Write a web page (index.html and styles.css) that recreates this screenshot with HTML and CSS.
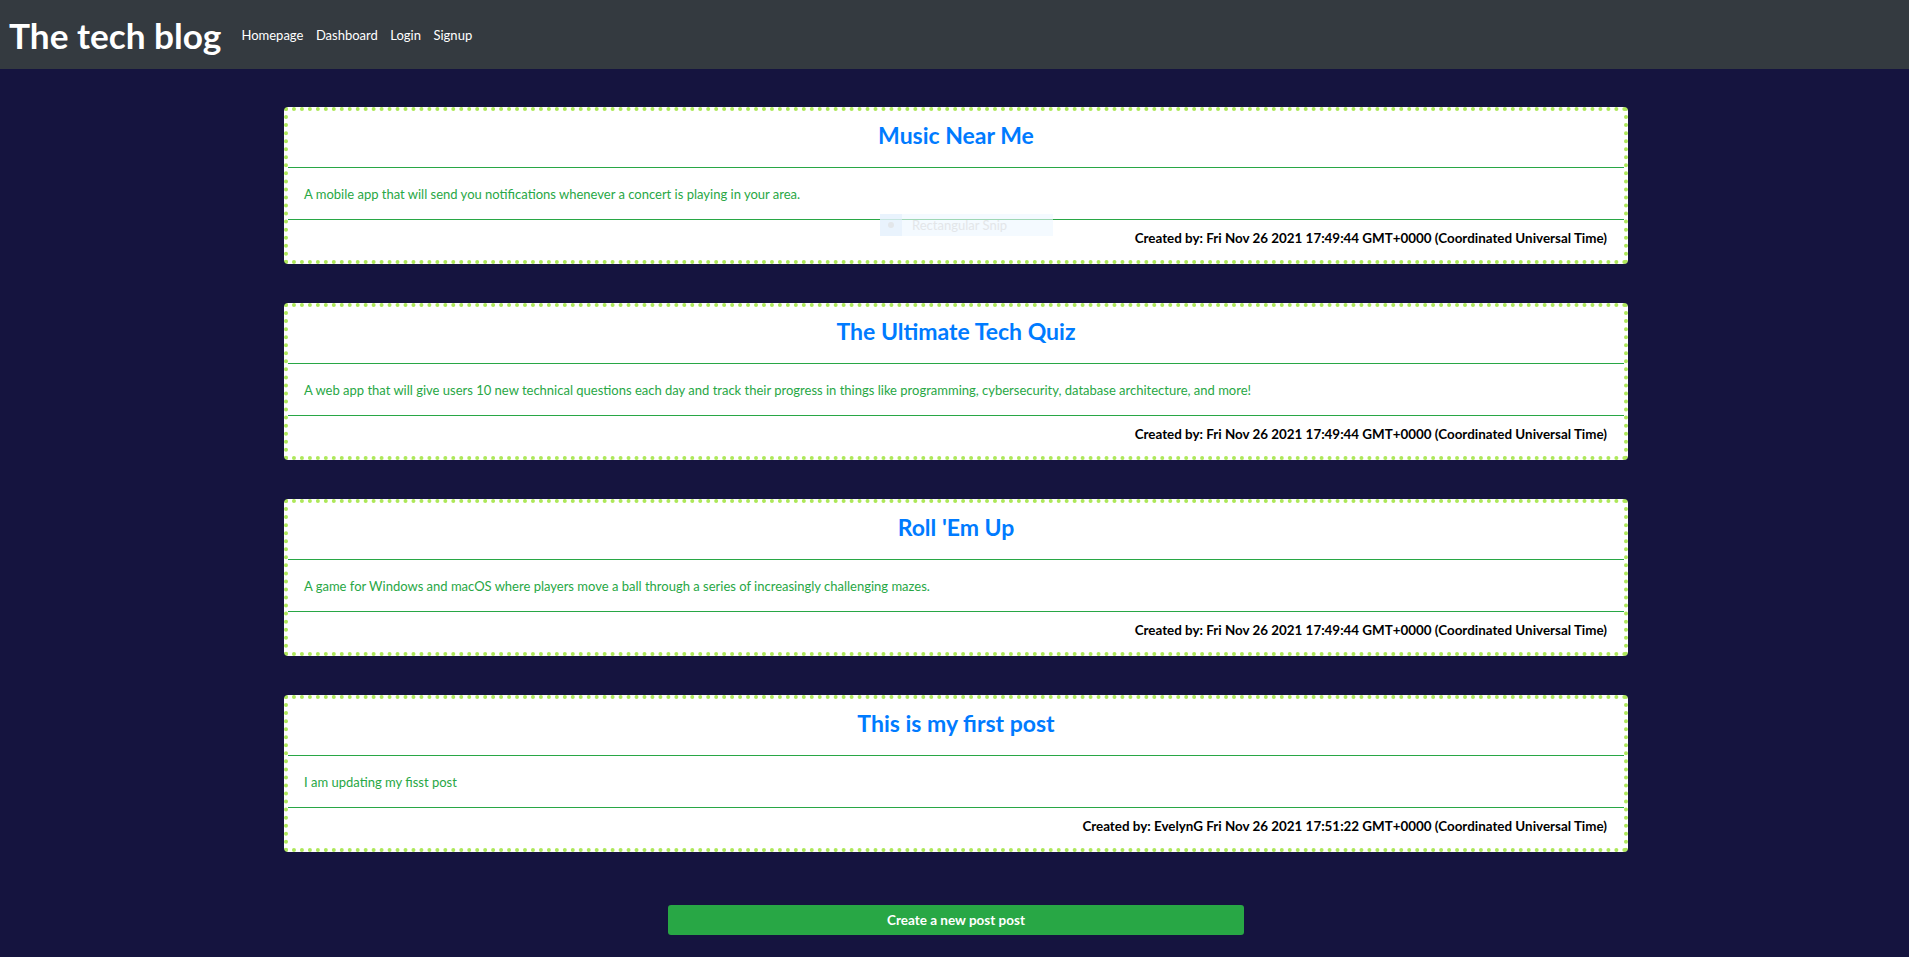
FILE: index.html
```html
<!DOCTYPE html>
<html lang="en">
<head>
<meta charset="utf-8">
<title>The tech blog</title>
<link rel="stylesheet" href="styles.css">
</head>
<body>
<header class="navbar">
  <a class="brand" href="#">The tech blog</a>
  <nav class="nav-links">
    <a href="#">Homepage</a>
    <a href="#">Dashboard</a>
    <a href="#">Login</a>
    <a href="#">Signup</a>
  </nav>
</header>
<main class="posts">
  <article class="card">
    <div class="card-header"><h2 class="card-title">Music Near Me</h2></div>
    <div class="card-body"><p>A mobile app that will send you notifications whenever a concert is playing in your area.</p></div>
    <div class="card-footer">Created by: Fri Nov 26 2021 17:49:44 GMT+0000 (Coordinated Universal Time)</div>
  </article>
  <article class="card">
    <div class="card-header"><h2 class="card-title">The Ultimate Tech Quiz</h2></div>
    <div class="card-body"><p>A web app that will give users 10 new technical questions each day and track their progress in things like programming, cybersecurity, database architecture, and more!</p></div>
    <div class="card-footer">Created by: Fri Nov 26 2021 17:49:44 GMT+0000 (Coordinated Universal Time)</div>
  </article>
  <article class="card">
    <div class="card-header"><h2 class="card-title">Roll 'Em Up</h2></div>
    <div class="card-body"><p>A game for Windows and macOS where players move a ball through a series of increasingly challenging mazes.</p></div>
    <div class="card-footer">Created by: Fri Nov 26 2021 17:49:44 GMT+0000 (Coordinated Universal Time)</div>
  </article>
  <article class="card">
    <div class="card-header"><h2 class="card-title">This is my first post</h2></div>
    <div class="card-body"><p>I am updating my fisst post</p></div>
    <div class="card-footer">Created by: EvelynG Fri Nov 26 2021 17:51:22 GMT+0000 (Coordinated Universal Time)</div>
  </article>
  <div class="actions">
    <button class="btn-create" type="button">Create a new post post</button>
  </div>
</main>
<div class="snip-overlay"><span class="snip-icon"></span><span class="snip-label">Rectangular Snip</span></div>
</body>
</html>
```
FILE: styles.css
```css
* { box-sizing: border-box; }
html, body { margin: 0; padding: 0; }
body {
  background: #15143f;
  font-family: Lato, "Open Sans", "Liberation Sans", sans-serif;
  min-height: 957px;
  position: relative;
}
.navbar {
  height: 69px;
  background: #343a40;
  display: flex;
  align-items: center;
  padding: 0 0 0 9px;
}
.brand {
  color: #fff;
  text-decoration: none;
  font-weight: 700;
  font-size: 35.2px;
  margin-right: 20px;
  line-height: 1;
  position: relative;
  top: 1px;
}
.nav-links { display: flex; gap: 12.5px; }
.nav-links a {
  color: #fff;
  text-decoration: none;
  font-size: 13px;
}
.posts {
  padding: 38px 0 0 3px;
  display: flex;
  flex-direction: column;
  align-items: center;
}
.card {
  width: 1344px;
  height: 157px;
  background: #fff;
  border: 4px dotted #aee85a;
  border-radius: 4px;
  margin-bottom: 39px;
  display: flex;
  flex-direction: column;
}
.card-header {
  height: 57px;
  border-bottom: 1px solid #28a745;
  display: flex;
  align-items: center;
  justify-content: center;
}
.card-title {
  margin: 0;
  color: #007bff;
  font-size: 23px;
  font-weight: 700;
  position: relative;
  top: -4px;
}
.card-body {
  height: 52px;
  border-bottom: 1px solid #28a745;
  display: flex;
  align-items: center;
  padding: 0 16px;
}
.card-body p {
  margin: 0;
  color: #28a745;
  font-size: 13px;
}
.card-footer {
  flex: 1;
  display: flex;
  align-items: center;
  justify-content: flex-end;
  padding: 0 17px 4px;
  font-weight: 700;
  font-size: 13.4px;
  color: #000;
}
.actions {
  display: flex;
  justify-content: center;
  padding-top: 14px;
}
.btn-create {
  width: 576px;
  height: 30px;
  border: none;
  border-radius: 3px;
  background: #28a745;
  color: #fff;
  font-family: inherit;
  font-weight: 700;
  font-size: 13.5px;
  cursor: pointer;
}
.snip-overlay {
  position: absolute;
  left: 880px;
  top: 214px;
  width: 173px;
  height: 22px;
  background: rgba(236, 246, 255, 0.6);
  display: flex;
  align-items: center;
}
.snip-icon {
  width: 22px;
  height: 22px;
  background: rgba(225, 238, 252, 0.6);
  position: relative;
  margin-right: 10px;
}
.snip-icon::after {
  content: "";
  position: absolute;
  left: 8px;
  top: 8px;
  width: 6px;
  height: 6px;
  border-radius: 50%;
  background: #e2e6ea;
}
.snip-label {
  color: #e3e6e9;
  font-size: 13px;
}
```
